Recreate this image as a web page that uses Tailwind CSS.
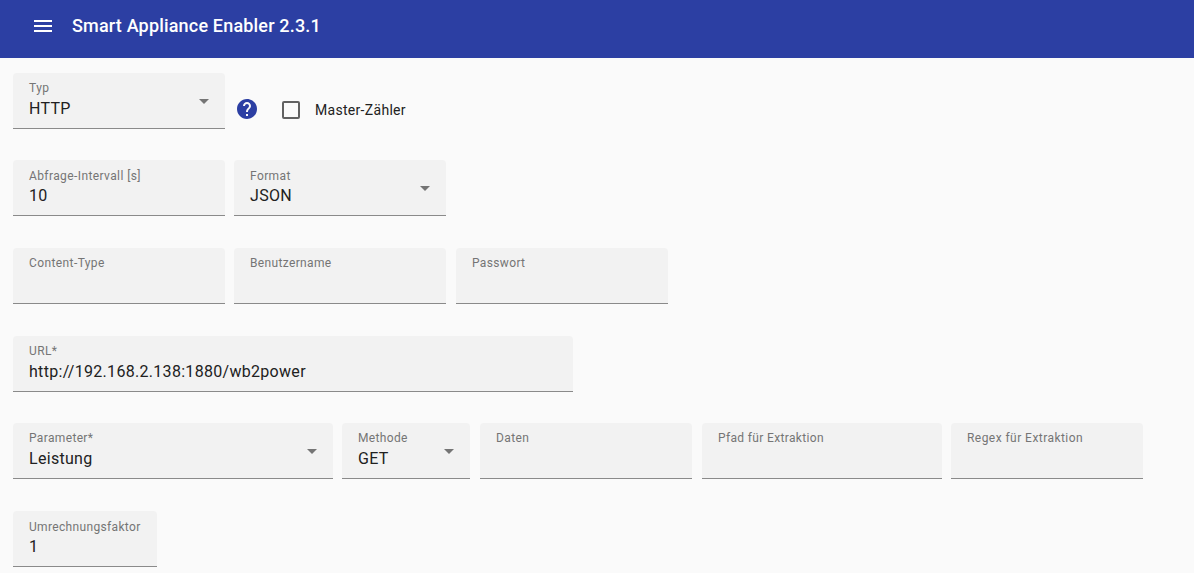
<!doctype html>
<html lang="de">
<head>
<meta charset="utf-8">
<title>Smart Appliance Enabler</title>
<script src="https://cdn.jsdelivr.net/npm/@tailwindcss/browser@4"></script>
</head>
<body class="bg-[#fafafa] font-['Roboto',sans-serif] overflow-hidden">
<div class="h-[573px] overflow-hidden">
  <header class="h-[58px] bg-[#2c3fa3] flex items-start pt-[14px] pl-[31px] text-white">
    <svg class="w-6 h-6 fill-white" viewBox="0 0 24 24"><path d="M3 18h18v-2H3v2zm0-5h18v-2H3v2zm0-7v2h18V6H3z"/></svg>
    <h1 class="ml-[17px] text-[18px] leading-6 font-medium tracking-[0.18px]">Smart Appliance Enabler 2.3.1</h1>
  </header>

  <main class="pt-[14.8px] pl-[13px] flex flex-col gap-[31.6px]">
    <div class="flex h-14">
      <div class="relative w-[212px] h-14 bg-[#f2f2f2] rounded-t border-b border-[#8a8a8a]">
        <div class="pl-4 pt-[8px] text-[12px] leading-[15px] text-[#757575] tracking-[0.4px]">Typ</div>
        <div class="pl-4 pt-[3px] text-[16px] leading-[20px] text-[#212121] tracking-[0.3px]">HTTP</div>
        <div class="absolute right-[16px] top-[26px] w-0 h-0 border-x-[5px] border-x-transparent border-t-[5px] border-t-[#757575]"></div>
      </div>
      <svg class="ml-[10px] mt-[24px] w-6 h-6 fill-[#2c3fa3]" viewBox="0 0 24 24"><path d="M12 2C6.48 2 2 6.48 2 12s4.48 10 10 10 10-4.48 10-10S17.52 2 12 2zm1 17h-2v-2h2v2zm2.07-7.75l-.9.92C13.45 12.9 13 13.5 13 15h-2v-.5c0-1.1.45-2.1 1.17-2.83l1.24-1.26c.37-.36.59-.86.59-1.41 0-1.1-.9-2-2-2s-2 .9-2 2H8c0-2.21 1.79-4 4-4s4 1.79 4 4c0 .88-.36 1.68-.93 2.25z"/></svg>
      <div class="ml-[23px] mt-[28px] w-[18px] h-[18px] rounded-[2px] border-2 border-[#616161]"></div>
      <span class="ml-[15px] mt-[28px] text-[14px] leading-[18px] text-[#212121] tracking-[0.3px]">Master-Zähler</span>
    </div>

    <div class="flex gap-[9px] h-14">
      <div class="relative w-[212px] h-14 bg-[#f2f2f2] rounded-t border-b border-[#8a8a8a]">
        <div class="pl-4 pt-[8.2px] text-[12px] leading-[15px] text-[#757575] tracking-[0.4px]">Abfrage-Intervall [s]</div>
        <div class="pl-4 pt-[2.8px] text-[16px] leading-[20px] text-[#212121] tracking-[0.3px]">10</div>
      </div>
      <div class="relative w-[212px] h-14 bg-[#f2f2f2] rounded-t border-b border-[#8a8a8a]">
        <div class="pl-4 pt-[8.2px] text-[12px] leading-[15px] text-[#757575] tracking-[0.4px]">Format</div>
        <div class="pl-4 pt-[2.8px] text-[16px] leading-[20px] text-[#212121] tracking-[0.3px]">JSON</div>
        <div class="absolute right-[16px] top-[26px] w-0 h-0 border-x-[5px] border-x-transparent border-t-[5px] border-t-[#757575]"></div>
      </div>
    </div>

    <div class="flex gap-[9px] h-14">
      <div class="w-[212px] h-14 bg-[#f2f2f2] rounded-t border-b border-[#8a8a8a]">
        <div class="pl-4 pt-[8px] text-[12px] leading-[15px] text-[#757575] tracking-[0.4px]">Content-Type</div>
      </div>
      <div class="w-[212px] h-14 bg-[#f2f2f2] rounded-t border-b border-[#8a8a8a]">
        <div class="pl-4 pt-[8px] text-[12px] leading-[15px] text-[#757575] tracking-[0.35px]">Benutzername</div>
      </div>
      <div class="ml-px w-[212px] h-14 bg-[#f2f2f2] rounded-t border-b border-[#8a8a8a]">
        <div class="pl-4 pt-[8px] text-[12px] leading-[15px] text-[#757575] tracking-[0.35px]">Passwort</div>
      </div>
    </div>

    <div class="flex h-14">
      <div class="w-[560px] h-14 bg-[#f2f2f2] rounded-t border-b border-[#8a8a8a]">
        <div class="pl-4 pt-[8px] text-[12px] leading-[15px] text-[#757575] tracking-[0.4px]">URL*</div>
        <div class="pl-4 pt-[3px] text-[16px] leading-[20px] text-[#212121] tracking-[0.3px]">http://192.168.2.138:1880/wb2power</div>
      </div>
    </div>

    <div class="flex h-14">
      <div class="relative w-[320px] h-14 bg-[#f2f2f2] rounded-t border-b border-[#8a8a8a]">
        <div class="pl-4 pt-[8px] text-[12px] leading-[15px] text-[#757575] tracking-[0.35px]">Parameter*</div>
        <div class="pl-4 pt-[3px] text-[16px] leading-[20px] text-[#212121] tracking-[0.3px]">Leistung</div>
        <div class="absolute right-[16px] top-[26px] w-0 h-0 border-x-[5px] border-x-transparent border-t-[5px] border-t-[#757575]"></div>
      </div>
      <div class="relative ml-[9px] w-[128px] h-14 bg-[#f2f2f2] rounded-t border-b border-[#8a8a8a]">
        <div class="pl-4 pt-[8px] text-[12px] leading-[15px] text-[#757575] tracking-[0.35px]">Methode</div>
        <div class="pl-4 pt-[3px] text-[16px] leading-[20px] text-[#212121] tracking-[0.3px]">GET</div>
        <div class="absolute right-[16px] top-[26px] w-0 h-0 border-x-[5px] border-x-transparent border-t-[5px] border-t-[#757575]"></div>
      </div>
      <div class="ml-[10px] w-[212px] h-14 bg-[#f2f2f2] rounded-t border-b border-[#8a8a8a]">
        <div class="pl-4 pt-[8px] text-[12px] leading-[15px] text-[#757575] tracking-[0.4px]">Daten</div>
      </div>
      <div class="ml-[10px] w-[240px] h-14 bg-[#f2f2f2] rounded-t border-b border-[#8a8a8a]">
        <div class="pl-4 pt-[8px] text-[12px] leading-[15px] text-[#757575] tracking-[0.35px]">Pfad für Extraktion</div>
      </div>
      <div class="ml-[9px] w-[192px] h-14 bg-[#f2f2f2] rounded-t border-b border-[#8a8a8a]">
        <div class="pl-4 pt-[8px] text-[12px] leading-[15px] text-[#757575] tracking-[0.45px]">Regex für Extraktion</div>
      </div>
    </div>

    <div class="flex h-14">
      <div class="w-[144px] h-14 bg-[#f2f2f2] rounded-t border-b border-[#8a8a8a]">
        <div class="pl-4 pt-[9px] text-[12px] leading-[15px] text-[#757575] tracking-[0.34px]">Umrechnungsfaktor</div>
        <div class="pl-4 pt-[2px] text-[16px] leading-[20px] text-[#212121] tracking-[0.3px]">1</div>
      </div>
    </div>
  </main>
</div>
</body>
</html>
